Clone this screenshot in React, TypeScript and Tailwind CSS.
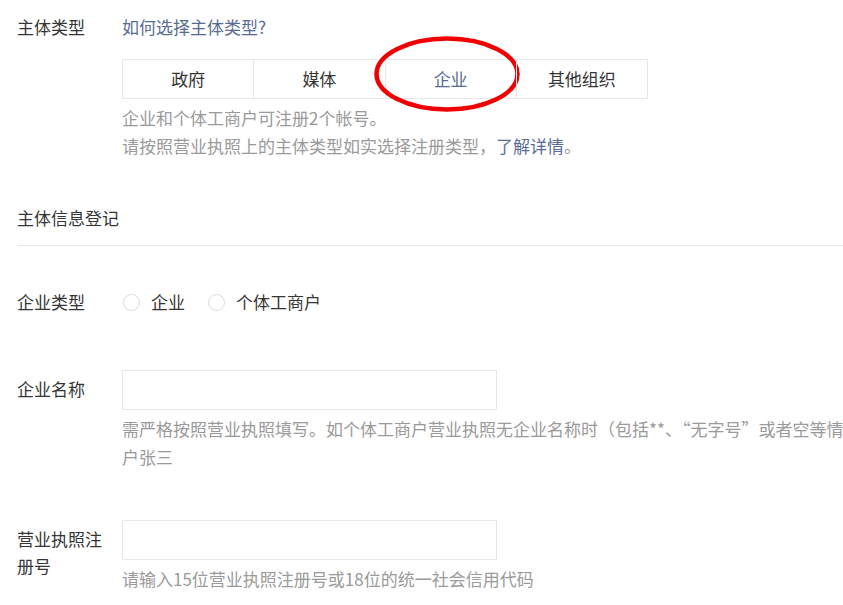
import { useState } from "react";

const TYPES = ["政府", "媒体", "企业", "其他组织"];

const App = () => {
  const [type, setType] = useState("企业");
  const [kind, setKind] = useState("");

  return (
    <div className="w-[843px] h-[605px] overflow-hidden bg-white text-[17px] leading-[28px] text-[#353535] font-['Noto_Sans_CJK_SC','Noto_Sans',sans-serif]">
      {/* 主体类型 */}
      <div className="flex pl-[17px] pt-[13px]">
        <div className="w-[105px] shrink-0 pr-[15px]">主体类型</div>
        <div className="flex-1">
          <a className="text-[#576b95] cursor-pointer">如何选择主体类型?</a>
          <div className="mt-[18px] flex w-[526px] h-[40px] border border-[#e4e8eb]">
            {TYPES.map((t, i) => (
              <button
                key={t}
                onClick={() => setType(t)}
                className={`relative flex-1 flex items-center justify-center ${i > 0 ? "border-l border-[#e4e8eb]" : ""} ${type === t ? "text-[#576b95]" : "text-[#353535]"}`}
              >
                {t}
                {t === "企业" && (
                  <svg className="absolute left-[-12px] top-[-24px] pointer-events-none" width="146" height="76" viewBox="0 0 146 76">
                    <ellipse cx="73" cy="38" rx="70.5" ry="35.5" fill="none" stroke="#f00000" strokeWidth="4.5" />
                  </svg>
                )}
              </button>
            ))}
          </div>
          <div className="mt-[5px] text-[#9a9a9a]">
            <p>企业和个体工商户可注册2个帐号。</p>
            <p>
              请按照营业执照上的主体类型如实选择注册类型，<a className="text-[#576b95] cursor-pointer">了解详情</a>。
            </p>
          </div>
        </div>
      </div>

      {/* 主体信息登记 */}
      <div className="mt-[44px] ml-[17px] pb-[13px] border-b border-[#e7e7eb]">主体信息登记</div>

      {/* 企业类型 */}
      <div className="mt-[42px] flex pl-[17px]">
        <div className="w-[105px] shrink-0 pr-[15px]">企业类型</div>
        <div className="flex items-center">
          {["企业", "个体工商户"].map((k, i) => (
            <label key={k} className={`flex items-center cursor-pointer ${i > 0 ? "ml-[23px]" : "ml-px"}`} onClick={() => setKind(k)}>
              <span className={`w-[17px] h-[17px] rounded-full border ${kind === k ? "border-[#1aad19] border-[5px]" : "border-[#d9dadc]"}`} />
              <span className="ml-[11px]">{k}</span>
            </label>
          ))}
        </div>
      </div>

      {/* 企业名称 */}
      <div className="mt-[54px] flex pl-[17px]">
        <div className="w-[105px] shrink-0 pr-[15px] pt-[5px]">企业名称</div>
        <div className="flex-1 min-w-0">
          <input className="block w-[375px] h-[40px] border border-[#e4e8eb] px-3 outline-none" />
          <div className="mt-[5px] text-[#9a9a9a]">
            <p className="whitespace-nowrap">
              需严格按照营业执照填写。如个体工商户营业执照无企业名称时（包括**、“无字号”或者空等情况），请填写“个体户+经营者姓名”，如个体
            </p>
            <p>户张三</p>
          </div>
        </div>
      </div>

      {/* 营业执照注册号 */}
      <div className="mt-[49px] flex pl-[17px]">
        <div className="w-[105px] shrink-0 pr-[15px] pt-[5px] leading-[27px]">营业执照注册号</div>
        <div className="flex-1 min-w-0">
          <input className="block w-[375px] h-[40px] border border-[#e4e8eb] px-3 outline-none" />
          <p className="mt-[5px] text-[#9a9a9a]">请输入15位营业执照注册号或18位的统一社会信用代码</p>
        </div>
      </div>
    </div>
  );
};

export default App;
